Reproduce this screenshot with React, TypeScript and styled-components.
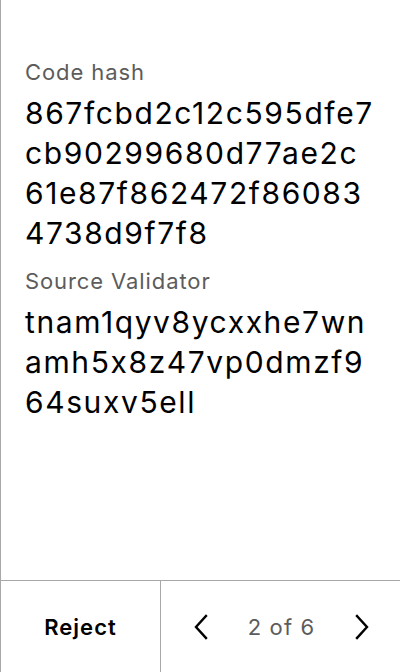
import React from "react";
import styled, { createGlobalStyle } from "styled-components";

const Global = createGlobalStyle`
  html, body { margin: 0; padding: 0; background: #fff; }
  body {
    font-family: Inter, "Noto Sans", sans-serif;
    font-feature-settings: "calt" 0;
  }
  * { box-sizing: border-box; }
`;

const Screen = styled.div`
  width: 400px;
  height: 672px;
  display: flex;
  flex-direction: column;
  border-left: 1px solid #a8a8a8;
  background: #fff;
`;

const Content = styled.div`
  flex: 1;
  padding: 56px 20px 0 24px;
  display: flex;
  flex-direction: column;
`;

const Label = styled.div`
  font-size: 22px;
  line-height: 32px;
  letter-spacing: 0.9px;
  color: #5c5c5c;
  margin-bottom: 5px;
`;

const Value = styled.div`
  font-size: 30px;
  line-height: 40px;
  letter-spacing: 1.6px;
  color: #000;
  word-break: break-all;
  margin-bottom: 12px;
`;

const Footer = styled.div`
  height: 92px;
  border-top: 1px solid #a8a8a8;
  display: flex;
`;

const RejectButton = styled.button`
  width: 160px;
  border: none;
  border-right: 1px solid #a8a8a8;
  background: transparent;
  font-family: Inter, sans-serif;
  font-size: 22px;
  font-weight: 600;
  letter-spacing: 1px;
  color: #000;
  padding: 0;
`;

const Pager = styled.div`
  flex: 1;
  display: flex;
  align-items: center;
  justify-content: space-between;
  padding: 0 28px 0 30px;
`;

const NavButton = styled.button`
  border: none;
  background: transparent;
  padding: 0;
  width: 20px;
  height: 28px;
  display: flex;
  align-items: center;
  justify-content: center;
`;

const PageText = styled.span`
  font-size: 22px;
  letter-spacing: 1.1px;
  color: #5c5c5c;
`;

const Chevron = ({ dir }: { dir: "left" | "right" }) => (
  <svg width="14" height="26" viewBox="0 0 14 26" fill="none">
    <path
      d={dir === "left" ? "M12 2 L2 13 L12 24" : "M2 2 L12 13 L2 24"}
      stroke="#000"
      strokeWidth="2.4"
      strokeLinecap="square"
      strokeLinejoin="miter"
    />
  </svg>
);

export default function App() {
  return (
    <>
      <Global />
      <Screen>
        <Content>
          <Label>Code hash</Label>
          <Value>
            867fcbd2c12c595dfe7
            <br />
            cb90299680d77ae2c
            <br />
            61e87f862472f86083
            <br />
            4738d9f7f8
          </Value>
          <Label>Source Validator</Label>
          <Value>
            tnam1qyv8ycxxhe7wn
            <br />
            amh5x8z47vp0dmzf9
            <br />
            64suxv5ell
          </Value>
        </Content>
        <Footer>
          <RejectButton>Reject</RejectButton>
          <Pager>
            <NavButton aria-label="Previous">
              <Chevron dir="left" />
            </NavButton>
            <PageText>2 of 6</PageText>
            <NavButton aria-label="Next">
              <Chevron dir="right" />
            </NavButton>
          </Pager>
        </Footer>
      </Screen>
    </>
  );
}
